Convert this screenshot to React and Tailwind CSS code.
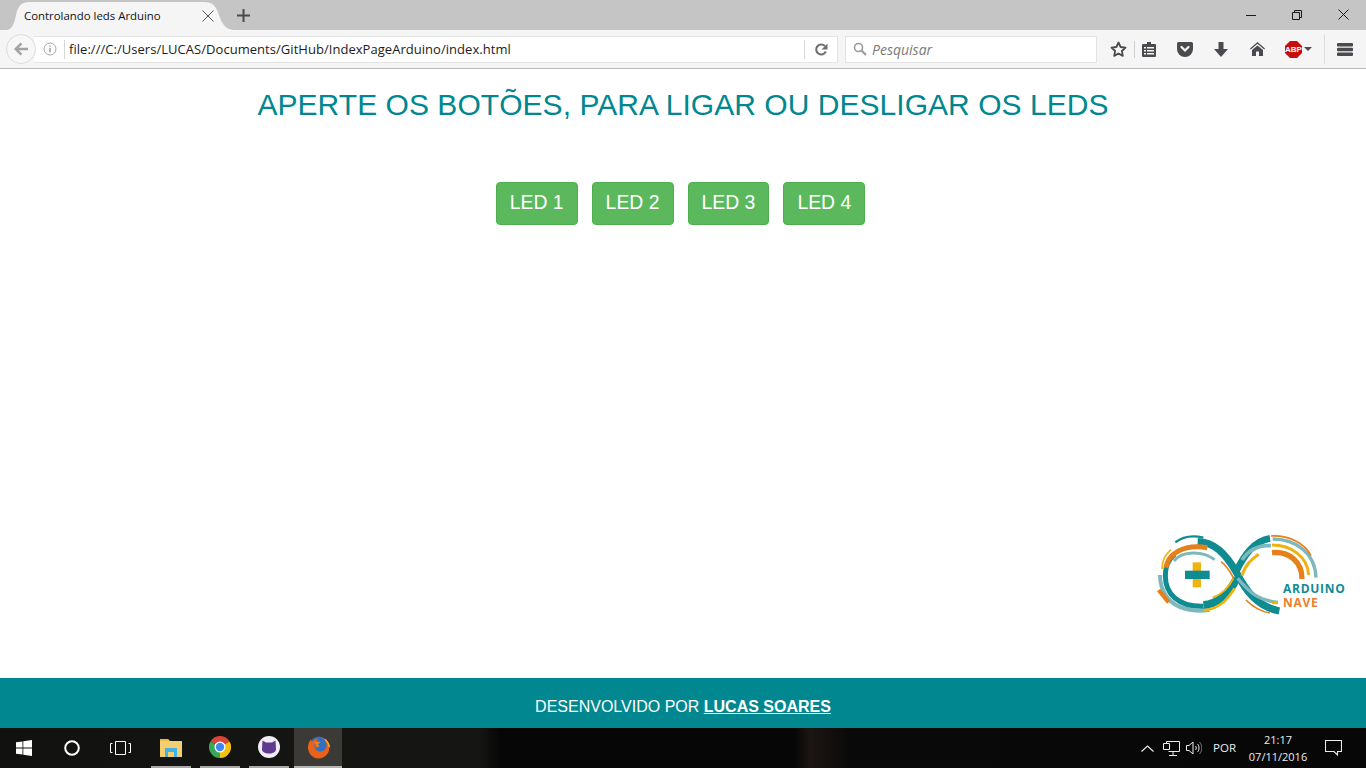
const leds = ["LED 1", "LED 2", "LED 3", "LED 4"];

function TabShape() {
  return (
    <svg width="235" height="30" viewBox="0 0 235 30" className="absolute left-0 top-0">
      <path d="M6 30 C12 30 14 24 16 15 C18 6 21 2 30 2 L204 2 C213 2 216 6 219 15 C222 24 226 30 235 30 Z" fill="#f5f5f5" />
    </svg>
  );
}

function WindowButtons() {
  return (
    <div className="ml-auto flex h-[30px] items-start">
      <div className="flex h-[29px] w-[46px] items-center justify-center">
        <svg width="10" height="10" viewBox="0 0 10 10"><path d="M0 5.5h10" stroke="#1a1a1a" /></svg>
      </div>
      <div className="flex h-[29px] w-[46px] items-center justify-center">
        <svg width="10" height="10" viewBox="0 0 10 10" fill="none" stroke="#1a1a1a">
          <path d="M.5 2.5h7v7h-7zM2.5 2.5v-2h7v7h-2" />
        </svg>
      </div>
      <div className="flex h-[29px] w-[46px] items-center justify-center">
        <svg width="11" height="11" viewBox="0 0 11 11" stroke="#1a1a1a"><path d="M.5.5l10 10M10.5.5l-10 10" /></svg>
      </div>
    </div>
  );
}

function ToolIcon({ w = 36, children }) {
  return <div className="flex h-full shrink-0 items-center justify-center" style={{ width: w }}>{children}</div>;
}

function Toolbar() {
  return (
    <div className="flex h-[39px] items-center border-b border-[#b9b9b9] bg-[#f5f5f5] pl-[6px] font-['Open_Sans',sans-serif]">
      <div className="z-10 flex h-[30px] w-[30px] shrink-0 items-center justify-center rounded-full border border-[#dcdcdc] bg-[#f7f7f7]">
        <svg width="16" height="14" viewBox="0 0 16 14">
          <path d="M7.5 0.5L1 7l6.5 6.5 1.8-1.8L5.800 8.300H15V5.700H5.800L9.300 2.300z" fill="#a3a3a3" />
        </svg>
      </div>
      <div className="-ml-[2px] flex h-[27px] w-[804px] shrink-0 items-center border border-l-0 border-[#e3e3e3] bg-white">
        <div className="flex w-[30px] shrink-0 justify-center pl-[2px]">
          <svg width="14" height="14" viewBox="0 0 14 14" fill="none">
            <circle cx="7" cy="7" r="6" stroke="#a8a8a8" />
            <path d="M7 6v4.200M7 3.500v1.300" stroke="#8d8d8d" strokeWidth="1.300" />
          </svg>
        </div>
        <div className="h-[19px] w-px shrink-0 bg-[#d6d6d6]" />
        <div className="flex-1 truncate pl-[4px] pt-[1px] text-[13px] leading-[25px] tracking-[0.04px] text-[#1c1c1c]">
          file:///C:/Users/LUCAS/Documents/GitHub/IndexPageArduino/index.html
        </div>
        <div className="h-[19px] w-px shrink-0 bg-[#d6d6d6]" />
        <div className="flex w-[32px] shrink-0 justify-center">
          <svg width="13" height="13" viewBox="0 0 13 13" fill="none">
            <path d="M10.800 8.500A5 5 0 1 1 10 3.200" stroke="#6f6f6f" strokeWidth="2" />
            <path d="M12.500 0.500V6.500H6.500z" fill="#6f6f6f" />
          </svg>
        </div>
      </div>
      <div className="ml-[7px] flex h-[27px] w-[252px] shrink-0 items-center border border-[#e3e3e3] bg-white pl-[7px]">
        <svg width="14" height="14" viewBox="0 0 14 14" fill="none">
          <circle cx="5.500" cy="5.500" r="4" stroke="#9a9a9a" strokeWidth="1.600" />
          <path d="M8.500 8.500L13 13" stroke="#9a9a9a" strokeWidth="2.200" />
        </svg>
        <span className="pl-[5px] pt-[2px] text-[14px] italic leading-none text-[#7a7a7a]">Pesquisar</span>
      </div>
      <div className="ml-[5px] flex h-full flex-1 items-center">
        <ToolIcon w={32}>
          <svg width="17" height="16" viewBox="0 0 17 16" fill="none">
            <path d="M8.500 1.500l2.100 4.500 4.900.6-3.600 3.400.9 4.900-4.300-2.400-4.300 2.400.9-4.900L1.500 6.600l4.900-.6z" stroke="#4a4a4f" strokeWidth="1.800" strokeLinejoin="round" />
          </svg>
        </ToolIcon>
        <div className="h-[17px] w-px shrink-0 bg-[#cfcfcf]" />
        <ToolIcon w={28}>
          <svg width="14" height="15" viewBox="0 0 14 15">
            <path d="M5 0h4v2h4a1 1 0 0 1 1 1v11a1 1 0 0 1-1 1H1a1 1 0 0 1-1-1V3a1 1 0 0 1 1-1h4z" fill="#4a4a4f" />
            <path d="M2 5h2v1.500H2zM5 5h7v1.500H5zM2 8h2v1.500H2zM5 8h7v1.500H5zM2 11h2v1.500H2zM5 11h7v1.500H5z" fill="#f5f5f5" />
          </svg>
        </ToolIcon>
        <ToolIcon w={44}>
          <svg width="16" height="15" viewBox="0 0 16 15">
            <path d="M1.500 0h13A1.500 1.500 0 0 1 16 1.500V7A8 8 0 0 1 0 7V1.500A1.500 1.500 0 0 1 1.500 0z" fill="#4a4a4f" />
            <path d="M4.500 5L8 8.500 11.500 5" fill="none" stroke="#f5f5f5" strokeWidth="2.200" strokeLinecap="round" />
          </svg>
        </ToolIcon>
        <ToolIcon w={28}>
          <svg width="14" height="15" viewBox="0 0 14 15"><path d="M4.500 0h5v7H14l-7 8-7-8h4.500z" fill="#4a4a4f" /></svg>
        </ToolIcon>
        <ToolIcon w={44}>
          <svg width="15" height="14" viewBox="0 0 15 14">
            <path d="M7.500 0L15 6.500l-.8 1-6.700-5.700L.8 7.500 0 6.500z" fill="#4a4a4f" />
            <path d="M7.500 3.400L13 8v6H9V9.500H6V14H2V8z" fill="#4a4a4f" />
          </svg>
        </ToolIcon>
        <ToolIcon w={28}>
          <svg width="17" height="17" viewBox="0 0 17 17">
            <path d="M5 0h7l5 5v7l-5 5H5l-5-5V5z" fill="#c70d0d" />
            <text x="8.500" y="11.300" textAnchor="middle" fontFamily="'Liberation Sans',sans-serif" fontWeight="700" fontSize="8" fill="#fff">ABP</text>
          </svg>
        </ToolIcon>
        <svg width="8" height="4" viewBox="0 0 8 4" className="-ml-[3px] mr-[12px] shrink-0"><path d="M0 0h8L4 4z" fill="#4a4a4f" /></svg>
        <div className="h-[30px] w-px shrink-0 bg-[#dcdcdc]" />
        <ToolIcon w={40}>
          <svg width="16" height="13" viewBox="0 0 16 13">
            <path d="M1 0h14a1 1 0 0 1 1 1v1.500a1 1 0 0 1-1 1H1a1 1 0 0 1-1-1V1a1 1 0 0 1 1-1zM1 4.800h14a1 1 0 0 1 1 1v1.400a1 1 0 0 1-1 1H1a1 1 0 0 1-1-1V5.800a1 1 0 0 1 1-1zM1 9.500h14a1 1 0 0 1 1 1V12a1 1 0 0 1-1 1H1a1 1 0 0 1-1-1v-1.500a1 1 0 0 1 1-1z" fill="#4a4a4f" />
          </svg>
        </ToolIcon>
      </div>
    </div>
  );
}

function ArduinoLogo() {
  const teal = "#0f8b92";
  const pale = "#7db8bd";
  const orange = "#e8801a";
  const yellow = "#efb30f";
  return (
    <svg width="210" height="100" viewBox="0 0 630 300" fill="none">
      {/* left loop */}
      <path d="M42 150C42 200 70 240 120 252C150 260 170 258 190 255" stroke={pale} strokeWidth="12" />
      <path d="M86 88C65 105 58 130 58 152C58 205 95 246 172 244" stroke={teal} strokeWidth="15" />
      <path d="M155 50C205 52 238 85 270 140C300 200 335 245 400 258" stroke={teal} strokeWidth="22" />
      <path d="M172 240C220 238 250 205 272 160" stroke={teal} strokeWidth="24" />
      <path d="M88 52C110 35 140 30 172 38" stroke={teal} strokeWidth="7" />
      <path d="M84 108C108 78 168 76 206 104" stroke={pale} strokeWidth="9" />
      <path d="M60 128C66 88 110 56 184 68" stroke={orange} strokeWidth="15" />
      <path d="M48 132C48 108 56 90 75 74" stroke={yellow} strokeWidth="5" />
      <path d="M38 195L68 232" stroke={orange} strokeWidth="13" />
      <path d="M172 256C225 252 250 215 266 190" stroke={yellow} strokeWidth="8" />
      <path d="M200 218C235 205 252 180 262 160" stroke={yellow} strokeWidth="6" />
      <path d="M225 110C245 125 255 145 262 158" stroke={orange} strokeWidth="5" />
      {/* right loop */}
      <path d="M372 40C325 47 295 90 270 140" stroke={teal} strokeWidth="20" />
      <path d="M380 42C450 42 508 85 510 158" stroke={pale} strokeWidth="10" />
      <path d="M375 33C430 30 475 55 495 92" stroke={orange} strokeWidth="5" />
      <path d="M378 60C435 60 485 95 488 150" stroke={yellow} strokeWidth="9" />
      <path d="M378 83C432 78 468 112 468 162" stroke={orange} strokeWidth="16" />
      <path d="M288 152C298 118 318 102 338 88" stroke={yellow} strokeWidth="9" />
      <path d="M288 105C308 74 340 60 375 62" stroke={pale} strokeWidth="11" />
      <path d="M275 160C310 200 332 226 396 232" stroke={pale} strokeWidth="10" />
      <path d="M300 225C325 250 345 260 372 264" stroke={orange} strokeWidth="5" />
      <path d="M378 234h18" stroke={yellow} strokeWidth="7" />
      {/* plus */}
      <path d="M140 112h25v75h-25z" fill={yellow} />
      <path d="M117 137h74v25h-74z" fill={teal} />
      <text x="411" y="203" fontFamily="'Open Sans',sans-serif" fontWeight="700" fontSize="36" letterSpacing="2.200" fill={teal}>ARDUINO</text>
      <text x="411" y="247" fontFamily="'Open Sans',sans-serif" fontWeight="700" fontSize="36" letterSpacing="2.200" fill="#ea7f2c">NAVE</text>
    </svg>
  );
}

function TaskTile({ active, children }) {
  return (
    <div className={`flex h-full shrink-0 flex-col items-center ${active ? "ml-[1px] w-[48px] bg-[#3b3a37]" : "w-[49px]"}`}>
      <div className="flex flex-1 items-center justify-center">{children}</div>
      <div className={`h-[2px] ${active ? "w-full bg-[#b5b5b3]" : "w-[40px] bg-[#a9a9a7]"}`} />
    </div>
  );
}

function Taskbar() {
  return (
    <div className="flex h-[40px] items-center bg-[linear-gradient(to_right,#11110f_0,#151513_340px,#151513_480px,#060606_500px,#060606_795px,#1c1614_810px,#0a0909_850px,#070707_100%)] font-['Open_Sans',sans-serif] text-white">
      <div className="flex h-full w-[48px] shrink-0 items-center justify-center">
        <svg width="16" height="16" viewBox="0 0 16 16" fill="#fff">
          <path d="M0 2.300L6.500 1.400V7.600H0zM7.300 1.300L16 0V7.600H7.300zM0 8.400H6.500V14.600L0 13.700zM7.300 8.400H16V16L7.300 14.700z" />
        </svg>
      </div>
      <div className="flex h-full w-[48px] shrink-0 items-center justify-center">
        <svg width="16" height="16" viewBox="0 0 16 16" fill="none"><circle cx="8" cy="8" r="6.800" stroke="#fff" strokeWidth="2" /></svg>
      </div>
      <div className="flex h-full w-[50px] shrink-0 items-center justify-center pr-[2px]">
        <svg width="21" height="14" viewBox="0 0 21 14" fill="none" stroke="#fff">
          <path d="M5.500.5h10v13h-10zM2.500 2.500H.5v9h2M18.500 2.500h2v9h-2" />
        </svg>
      </div>
      <TaskTile>
        <svg width="22" height="20" viewBox="0 0 22 20">
          <path d="M0 2h8l2 2h12v16H0z" fill="#f4cf6f" />
          <path d="M0 2h8l1 2H0z" fill="#e9b949" />
          <path d="M5 11h12v9h-3v-5H8v5H5z" fill="#3fb2e6" />
          <path d="M8 15h6v5H8z" fill="#f4cf6f" />
        </svg>
      </TaskTile>
      <TaskTile>
        <svg width="22" height="22" viewBox="0 0 22 22">
          <path d="M11 11L20.530 5.500A11 11 0 0 0 1.470 5.500z" fill="#db4437" />
          <path d="M11 11L20.530 5.500A11 11 0 0 1 11 22z" fill="#f4c20d" />
          <path d="M11 11L11 22A11 11 0 0 1 1.470 5.500z" fill="#3aa757" />
          <circle cx="11" cy="11" r="5.500" fill="#fff" />
          <circle cx="11" cy="11" r="4.200" fill="#4285f4" />
        </svg>
      </TaskTile>
      <TaskTile>
        <svg width="22" height="22" viewBox="0 0 22 22">
          <circle cx="11" cy="11" r="11" fill="#f0edf5" />
          <path d="M4.500 4.500L8 6.500h6l3.500-2 .5 8.500c0 3-3 4.500-7 4.500S4 16 4 13z" fill="#5f3a8f" />
        </svg>
      </TaskTile>
      <TaskTile active>
        <svg width="23" height="23" viewBox="0 0 23 23">
          <circle cx="12" cy="10" r="9.500" fill="#2f6fc4" />
          <path d="M11.500 22.500A11 11 0 0 1 1.500 8C2 6 3 4.500 4 3.500L5 6C7 3.500 9 2.500 11 2 10 3.500 9.500 5 10 6 8 7 7 8.500 7.500 10.500 8 14 11 16 14 15.500 17.500 15 20 12 19.500 8 19 5 17 3 15 2 19 2.500 22 6 22.500 11A11 11 0 0 1 11.500 22.500z" fill="#e8621a" />
          <path d="M7.500 5.500L12 5.500 13.500 7 11 8 12.500 10.500 9 11.500z" fill="#ee7a1e" />
          <path d="M18 3.500C20.500 5.500 22 8 22.300 11" fill="none" stroke="#f7b02a" strokeWidth="1.400" />
        </svg>
      </TaskTile>
      <div className="ml-auto flex h-full items-center">
        <div className="flex w-[19px] justify-center">
          <svg width="13" height="7" viewBox="0 0 13 7" fill="none" stroke="#ececec" strokeWidth="1.200"><path d="M.5 6.500l6-5.500 6 5.500" /></svg>
        </div>
        <div className="flex w-[28px] justify-center">
          <svg width="17" height="15" viewBox="0 0 17 15" fill="none" stroke="#ececec">
            <path d="M3.500 2.500V.5H16.500V10.500H5.500M10 10.500V14M6 14.500H14M.5 2.500H6.500V8.500H.500z" />
          </svg>
        </div>
        <div className="flex w-[18px] justify-center">
          <svg width="16" height="14" viewBox="0 0 16 14" fill="none" stroke="#ececec">
            <path d="M.5 4.500h2.500L7 1v12L3 9.500H.5zM9.500 5c1 1 1 3 0 4M11.500 3c2 2 2 6 0 8" />
            <path d="M13.500 1c3 3 3 9 0 12" stroke="#777" />
          </svg>
        </div>
        <div className="w-[42px] pl-[1px] text-center text-[11.500px] leading-none text-[#ececec]">POR</div>
        <div className="w-[66px] text-center text-[11px] leading-[17px] text-[#ececec]">
          <div>21:17</div>
          <div>07/11/2016</div>
        </div>
        <div className="flex w-[44px] justify-center pl-[1px]">
          <svg width="17" height="16" viewBox="0 0 17 16" fill="none" stroke="#ececec" strokeWidth="1.100">
            <path d="M.5.500h16v11h-4v3.500l-3.500-3.500H.5z" />
          </svg>
        </div>
        <div className="w-[11px]" />
      </div>
    </div>
  );
}

export default function App() {
  return (
    <div className="flex h-screen flex-col overflow-hidden bg-white font-['Liberation_Sans',sans-serif]">
      <div className="flex h-[30px] shrink-0 items-center bg-[#c5c5c5]">
        <div className="relative h-[30px] w-[235px] shrink-0">
          <TabShape />
          <div className="relative flex h-[30px] items-center pl-[24px] pr-[21px] pt-[1px] font-['Open_Sans',sans-serif]">
            <span className="text-[11.400px] text-[#111]">Controlando leds Arduino</span>
            <svg width="12" height="12" viewBox="0 0 12 12" className="ml-auto" stroke="#555"><path d="M.5.500l11 11M11.500.500l-11 11" /></svg>
          </div>
        </div>
        <svg width="13" height="13" viewBox="0 0 13 13" className="ml-[2px]" fill="#4a4a4a"><path d="M5.500 0h2v5.500H13v2H7.500V13h-2V7.500H0v-2h5.500z" /></svg>
        <WindowButtons />
      </div>
      <Toolbar />
      <div className="flex flex-1 flex-col items-center">
        <h2 className="mt-[19px] text-[30px] leading-[33px] tracking-[0.04px] text-[#00878f]">
          APERTE OS BOTÕES, PARA LIGAR OU DESLIGAR OS LEDS
        </h2>
        <div className="mr-[5px] mt-[61px] flex gap-[14px]">
          {leds.map((led) => (
            <button key={led} className="h-[43px] rounded-[4px] border border-[#4cae4c] bg-[#5cb85c] px-[13px] pb-[2px] text-[19.400px] leading-none text-white">
              {led}
            </button>
          ))}
        </div>
        <div className="mb-[53px] mr-[10px] mt-auto self-end">
          <ArduinoLogo />
        </div>
      </div>
      <div className="flex h-[50px] shrink-0 items-center justify-center bg-[#00878f] pt-[7px] text-[16px] text-white">
        <span>DESENVOLVIDO POR&nbsp;</span>
        <a className="font-bold underline">LUCAS SOARES</a>
      </div>
      <Taskbar />
    </div>
  );
}
